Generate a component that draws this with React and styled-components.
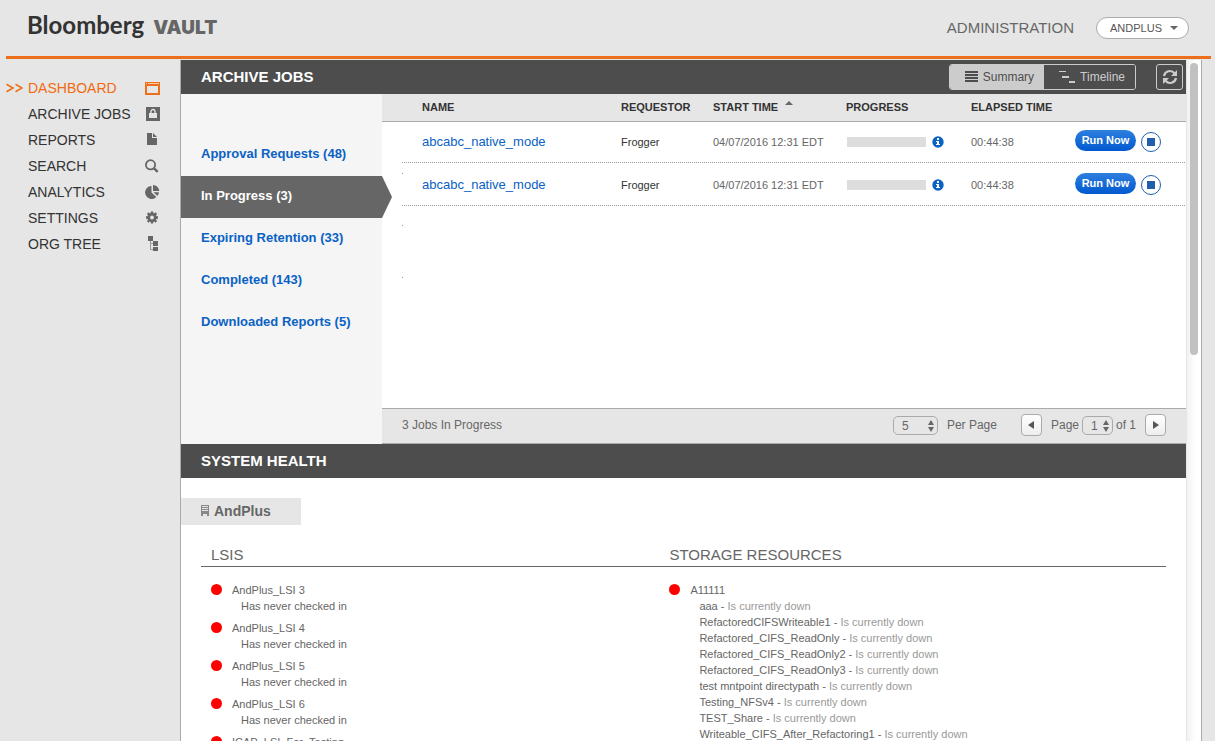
import React, { useState } from 'react';
import styled, { createGlobalStyle } from 'styled-components';

const GlobalStyle = createGlobalStyle`
  * { box-sizing: border-box; }
  body {
    margin: 0;
    background: #e6e6e6;
    color: #666;
    font-family: "Liberation Sans", Arial, Helvetica, sans-serif;
    font-size: 11px;
  }
  button, select { font-family: inherit; }
  a { text-decoration: none; }
  ul { list-style: none; margin: 0; padding: 0; }
  h1, h2, h3 { margin: 0; }
`;

const Page = styled.div`
  display: flex;
  flex-direction: column;
  height: 100vh;
  overflow: hidden;
`;

const Header = styled.header`
  display: flex;
  align-items: center;
  flex: none;
  height: 59px;
  margin: 0 4px 0 6px;
  padding: 0 22px 0 21px;
  border-bottom: 3px solid #ec6f1b;
`;

const Logo = styled.h1`
  display: flex;
  align-items: baseline;
  gap: 9px;
  flex: 1;
  padding-bottom: 4px;
  font-family: Lato, sans-serif;
  font-size: 24px;
  font-weight: 700;
  line-height: 32px;
  color: #333;
`;

const LogoSuffix = styled.span`
  font-family: Inter, sans-serif;
  font-size: 19px;
  font-weight: 900;
  color: #666;
`;

const AdminLink = styled.a`
  font-size: 15px;
  line-height: 16px;
  padding-bottom: 1px;
  color: #666;
`;

const AccountButton = styled.button`
  display: flex;
  align-items: center;
  gap: 8px;
  height: 22px;
  margin-left: 22px;
  padding: 0 10px 0 13px;
  border: 1px solid #aaa;
  border-radius: 11px;
  background: #fff;
  color: #555;
  font-size: 11px;
`;

const Body = styled.div`
  display: flex;
  flex: 1;
  min-height: 0;
  margin-top: 1px;
  padding-right: 13px;
`;

const Sidebar = styled.nav`
  flex: none;
  width: 180px;
  padding-top: 15px;
`;

const NavLink = styled.a`
  display: grid;
  grid-template-columns: 22px 1fr 16px;
  align-items: center;
  height: 26px;
  padding: 0 19px 0 6px;
  font-size: 14px;
  color: ${(p) => (p.$active ? '#f26a12' : '#333')};

  svg {
    color: ${(p) => (p.$active ? '#ec6f1b' : '#666')};
  }
`;

const Content = styled.main`
  flex: 1;
  min-width: 0;
  overflow: hidden;
  border-left: 1px solid #aaa;
  background: #fff;
`;

const ScrollTrack = styled.div`
  flex: none;
  width: 16px;
  padding: 3px 3px 0;
  border-left: 1px solid #e6e6e6;
  border-right: 1px solid #aaa;
  background: linear-gradient(to right, #f2f2f2, #fff 60%);
`;

const ScrollThumb = styled.div`
  width: 8px;
  height: 43%;
  border-radius: 4px;
  background: #c1c1c1;
`;

const SectionBar = styled.div`
  display: flex;
  align-items: center;
  height: 34px;
  padding: 0 3px 0 20px;
  background: #4d4d4d;
`;

const SectionTitle = styled.h2`
  flex: 1;
  padding-bottom: 2px;
  font-size: 15px;
  color: #fff;
`;

const ViewSwitch = styled.div`
  display: flex;
  height: 26px;
  margin-right: 20px;
  border: 1px solid #ccc;
  border-radius: 3px;
  overflow: hidden;
`;

const ViewButton = styled.button`
  display: flex;
  align-items: center;
  gap: 4px;
  padding: 0 10px 0 15px;
  border: 0;
  background: ${(p) => (p.$on ? '#ccc' : '#4d4d4d')};
  color: ${(p) => (p.$on ? '#4d4d4d' : '#ccc')};
  font-size: 12px;
`;

const RefreshButton = styled.button`
  display: flex;
  align-items: center;
  justify-content: center;
  width: 27px;
  height: 26px;
  padding: 0;
  border: 1px solid #ccc;
  border-radius: 3px;
  background: transparent;
  color: #ccc;
`;

const Jobs = styled.section`
  display: flex;
  min-height: 350px;
`;

const JobTabs = styled.nav`
  flex: none;
  width: 201px;
  padding-top: 40px;
  background: #f5f5f5;
`;

const JobTab = styled.a`
  position: relative;
  display: block;
  height: 42px;
  padding-left: 20px;
  font-size: 13px;
  font-weight: bold;
  line-height: 40px;
  color: ${(p) => (p.$active ? '#fff' : '#0a62c4')};
  background: ${(p) => (p.$active ? '#666' : 'transparent')};

  &::after {
    content: '';
    display: ${(p) => (p.$active ? 'block' : 'none')};
    position: absolute;
    top: 0;
    left: 100%;
    border: solid transparent;
    border-width: 21px 0 21px 10px;
    border-left-color: #666;
  }
`;

const JobPanel = styled.div`
  display: flex;
  flex-direction: column;
  flex: 1;
  min-width: 0;
`;

const dot = 'linear-gradient(#999, #999)';

const TableArea = styled.div`
  flex: 1;
  background: ${dot} 20px 79px / 1px 1px no-repeat,
    ${dot} 20px 131px / 1px 1px no-repeat,
    ${dot} 20px 183px / 1px 1px no-repeat;
`;

const JobTable = styled.table`
  width: 100%;
  table-layout: fixed;
  border-collapse: separate;
  border-spacing: 0;
  text-align: left;

  th {
    height: 28px;
    padding: 0 0 2px;
    border-bottom: 1px solid #aaa;
    background: #e6e6e6;
    color: #333;
    font-size: 11px;
  }
  td {
    height: 43px;
    padding: 0;
  }
  tbody tr {
    background: repeating-linear-gradient(to right, #999 0 1px, transparent 1px 2px) 20px 100% / 100% 1px no-repeat;
  }
  tbody tr:first-child td {
    height: 41px;
    padding-bottom: 2px;
  }
  th:nth-child(2), td:nth-child(2) {
    padding-left: 20px;
  }
`;

const SortArrow = styled.svg`
  margin-left: 7px;
  vertical-align: 6px;
`;

const JobLink = styled.a`
  font-size: 13px;
  color: #0a62c4;
`;

const Requestor = styled.span`
  color: #333;
`;

const Progress = styled.div`
  display: flex;
  align-items: center;
  gap: 6px;
  padding-left: 1px;
  color: #0a62c4;
`;

const ProgressBar = styled.div`
  width: 79px;
  height: 10px;
  background: #ddd;
`;

const Actions = styled.div`
  display: flex;
  align-items: center;
  gap: 5px;
`;

const RunButton = styled.button`
  width: 61px;
  height: 21px;
  margin-bottom: 3px;
  padding: 0 0 1px;
  border: 0;
  border-radius: 11px;
  background: linear-gradient(#2f7fdf, #0059cf);
  color: #fff;
  font-size: 11px;
  font-weight: bold;
`;

const StopButton = styled.button`
  display: flex;
  align-items: center;
  justify-content: center;
  width: 20px;
  height: 20px;
  padding: 0;
  border: 1px solid #1f5fae;
  border-radius: 50%;
  background: #fff;

  &::before {
    content: '';
    width: 8px;
    height: 8px;
    background: #1f5fae;
  }
`;

const Footer = styled.div`
  display: flex;
  align-items: center;
  height: 36px;
  padding: 0 20px 2px;
  border-top: 1px solid #aaa;
  border-bottom: 1px solid #aaa;
  background: #e6e6e6;
  font-size: 12px;
`;

const FooterCount = styled.span`
  flex: 1;
`;

const SelectBox = styled.span`
  display: flex;
  align-items: center;
  position: relative;
  padding-top: 1px;

  svg {
    position: absolute;
    right: 4px;
    pointer-events: none;
  }
`;

const Select = styled.select`
  appearance: none;
  width: ${(p) => (p.$small ? '31px' : '45px')};
  height: 19px;
  padding: 0 8px;
  border: 1px solid #aaa;
  border-radius: 5px;
  background: transparent;
  color: #666;
  font-size: 12px;
`;

const PerPage = styled.label`
  display: flex;
  align-items: center;
  gap: 9px;
  margin-right: 24px;
`;

const PageLabel = styled.label`
  display: flex;
  align-items: center;
  gap: 3px;
  margin: 0 9px;
`;

const PagerButton = styled.button`
  display: flex;
  align-items: center;
  justify-content: center;
  width: 21px;
  height: 22px;
  padding: 0;
  border: 1px solid #aaa;
  border-radius: 4px;
  background: linear-gradient(#fff, #eee);
  color: #555;
`;

const Health = styled.section`
  padding-top: 20px;
`;

const OrgTab = styled.h3`
  display: flex;
  align-items: center;
  gap: 5px;
  width: 120px;
  height: 27px;
  padding: 0 0 2px 20px;
  background: #e6e6e6;
  font-size: 14px;
`;

const HealthGrid = styled.div`
  display: grid;
  grid-template-columns: 19fr 21fr;
  margin: 20px 20px 0;
`;

const HealthTitle = styled.h3`
  padding: 0 10px 2px;
  border-bottom: 1px solid #666;
  font-size: 15px;
  font-weight: normal;
  line-height: 19px;
`;

const StatusList = styled.ul`
  padding: 15px 10px 0;
  line-height: 16px;
`;

const StatusItem = styled.li`
  display: grid;
  grid-template-columns: 11px 1fr;
  column-gap: 10px;
  margin-bottom: 6px;

  &::before {
    content: '';
    height: 11px;
    margin-top: 2px;
    border-radius: 50%;
    background: #f00;
  }
`;

const Detail = styled.div`
  padding-left: 9px;
`;

const Muted = styled.span`
  color: #999;
`;

const ChevronsIcon = () => (
  <svg width="17" height="10" viewBox="0 0 17 10" fill="none" stroke="currentColor" strokeWidth="1.600">
    <path d="M.5 1.300L7 5 .5 8.700M9.500 1.300L16 5l-6.500 3.700" />
  </svg>
);

const DashboardIcon = () => (
  <svg width="16" height="14" viewBox="0 0 16 14">
    <path fill="currentColor" fillRule="evenodd" d="M0 1h15v13H0zM2 5v7h11V5z" />
    <path fill="#f8c9a5" d="M1 2h1v1H1zM3 2h11v1H3z" />
  </svg>
);

const LockIcon = () => (
  <svg width="16" height="14" viewBox="0 0 16 14">
    <path fill="currentColor" d="M1 0h14v14H1z" />
    <path fill="#e6e6e6" d="M4 6h8v5H4z" />
    <path fill="none" stroke="#e6e6e6" strokeWidth="1.300" d="M6 6V4.500a2 2 0 0 1 4 0V6" />
  </svg>
);

const FileIcon = () => (
  <svg width="16" height="14" viewBox="0 0 16 14">
    <path fill="currentColor" d="M2 0h5v5h5v7H2zM8 0l4 4H8z" />
  </svg>
);

const SearchIcon = () => (
  <svg width="16" height="14" viewBox="0 0 16 14" fill="none" stroke="currentColor">
    <circle cx="5.500" cy="5.800" r="4.600" strokeWidth="1.800" />
    <path strokeWidth="2.400" d="M9 9.300l3.700 3.600" />
  </svg>
);

const PieIcon = () => (
  <svg width="16" height="14" viewBox="0 0 16 14" fill="currentColor">
    <path d="M6.500 1v6.500l4.800 4.500A6.500 6.500 0 1 1 6.500 1z" />
    <path d="M8 0a6.300 6.300 0 0 1 6.300 6H8z" />
    <path d="M8.500 7.200h5.500a6 6 0 0 1-1.700 3.800z" />
  </svg>
);

const GearIcon = () => (
  <svg width="16" height="14" viewBox="0 0 16 14">
    <circle cx="7" cy="6.500" r="3.300" fill="none" stroke="currentColor" strokeWidth="2.800" />
    <path
      stroke="currentColor"
      strokeWidth="2.400"
      d="M7 .5v2M7 10.500v2M1 6.500h2M11 6.500h2M2.700 2.200l1.500 1.500M9.800 9.300l1.500 1.500M2.700 10.800l1.500-1.500M9.800 3.700l1.500-1.500"
    />
  </svg>
);

const TreeIcon = () => (
  <svg width="16" height="16" viewBox="0 0 16 16">
    <path fill="none" stroke="#999" d="M5.500 5v8.500H9M5.500 7.500H9" />
    <path fill="currentColor" d="M3 0h5v5H3zM8 5h5v5H8zM8 11h5v4H8z" />
  </svg>
);

const SummaryIcon = () => (
  <svg width="14" height="12" viewBox="0 0 14 12" fill="currentColor">
    <path d="M0 0h13v2H0zM0 3h13v2H0zM0 6h13v2H0zM0 9h13v2H0z" />
  </svg>
);

const TimelineIcon = () => (
  <svg width="17" height="12" viewBox="0 0 17 12" fill="currentColor">
    <path d="M0 0h7v1H0zM3 5h7v2H3zM10 10h6v2h-6z" />
  </svg>
);

const RefreshIcon = () => (
  <svg width="16" height="16" viewBox="0 0 16 16">
    <path fill="none" stroke="currentColor" strokeWidth="2.200" d="M2 7A6 6 0 0 1 12.500 4.200M14 9A6 6 0 0 1 3.500 11.800" />
    <path fill="currentColor" d="M15 1v6H9zM1 15V9h6z" />
  </svg>
);

const InfoIcon = () => (
  <svg width="12" height="12" viewBox="0 0 12 12">
    <circle cx="6" cy="6" r="5.700" fill="currentColor" />
    <path fill="#fff" d="M5 2h2v2H5zM4 5h3v3h1v1H4V8h1V6H4z" />
  </svg>
);

const BuildingIcon = () => (
  <svg width="8" height="11" viewBox="0 0 8 11">
    <path fill="#888" fillRule="evenodd" d="M0 0h8v11H6V9H2v2H0zM1 1v1h6V1zM1 3v1h6V3zM1 5v1h6V5z" />
  </svg>
);

const UpDownIcon = () => (
  <svg width="6" height="12" viewBox="0 0 6 12" fill="#666">
    <path d="M3 0l3 5H0zM3 12l3-5H0z" />
  </svg>
);

const navItems = [
  { name: 'DASHBOARD', icon: <DashboardIcon />, active: true },
  { name: 'ARCHIVE JOBS', icon: <LockIcon /> },
  { name: 'REPORTS', icon: <FileIcon /> },
  { name: 'SEARCH', icon: <SearchIcon /> },
  { name: 'ANALYTICS', icon: <PieIcon /> },
  { name: 'SETTINGS', icon: <GearIcon /> },
  { name: 'ORG TREE', icon: <TreeIcon /> },
];

const jobTabs = [
  'Approval Requests (48)',
  'In Progress (3)',
  'Expiring Retention (33)',
  'Completed (143)',
  'Downloaded Reports (5)',
];

const jobs = [
  { id: 1, name: 'abcabc_native_mode', requestor: 'Frogger', start: '04/07/2016 12:31 EDT', elapsed: '00:44:38' },
  { id: 2, name: 'abcabc_native_mode', requestor: 'Frogger', start: '04/07/2016 12:31 EDT', elapsed: '00:44:38' },
];

const lsis = ['AndPlus_LSI 3', 'AndPlus_LSI 4', 'AndPlus_LSI 5', 'AndPlus_LSI 6', 'ICAP_LSI_For_Testing'];

const storage = [
  'aaa',
  'RefactoredCIFSWriteable1',
  'Refactored_CIFS_ReadOnly',
  'Refactored_CIFS_ReadOnly2',
  'Refactored_CIFS_ReadOnly3',
  'test mntpoint directypath',
  'Testing_NFSv4',
  'TEST_Share',
  'Writeable_CIFS_After_Refactoring1',
];

const App = () => {
  const [tab, setTab] = useState('In Progress (3)');
  const [view, setView] = useState('summary');

  return (
    <Page>
      <GlobalStyle />
      <Header>
        <Logo>
          Bloomberg <LogoSuffix>VAULT</LogoSuffix>
        </Logo>
        <AdminLink href="#admin">ADMINISTRATION</AdminLink>
        <AccountButton>
          ANDPLUS
          <svg width="8" height="4" viewBox="0 0 8 4" fill="#666"><path d="M0 0h8L4 4z" /></svg>
        </AccountButton>
      </Header>

      <Body>
        <Sidebar>
          {navItems.map((item) => (
            <NavLink href="#" key={item.name} $active={item.active}>
              <span>{item.active && <ChevronsIcon />}</span>
              <span>{item.name}</span>
              {item.icon}
            </NavLink>
          ))}
        </Sidebar>

        <Content>
          <SectionBar>
            <SectionTitle>ARCHIVE JOBS</SectionTitle>
            <ViewSwitch>
              <ViewButton $on={view === 'summary'} onClick={() => setView('summary')}>
                <SummaryIcon /> Summary
              </ViewButton>
              <ViewButton $on={view === 'timeline'} onClick={() => setView('timeline')}>
                <TimelineIcon /> Timeline
              </ViewButton>
            </ViewSwitch>
            <RefreshButton aria-label="Refresh">
              <RefreshIcon />
            </RefreshButton>
          </SectionBar>

          <Jobs>
            <JobTabs>
              {jobTabs.map((name) => (
                <JobTab href="#" key={name} $active={name === tab} onClick={() => setTab(name)}>
                  {name}
                </JobTab>
              ))}
            </JobTabs>

            <JobPanel>
              <TableArea>
                <JobTable>
                  <colgroup>
                    <col width="20" />
                    <col />
                    <col width="92" />
                    <col width="133" />
                    <col width="125" />
                    <col width="104" />
                    <col width="111" />
                  </colgroup>
                  <thead>
                    <tr>
                      <th />
                      <th>NAME</th>
                      <th>REQUESTOR</th>
                      <th>
                        START TIME
                        <SortArrow width="8" height="4" viewBox="0 0 8 4" fill="#666"><path d="M4 0l4 4H0z" /></SortArrow>
                      </th>
                      <th>PROGRESS</th>
                      <th>ELAPSED TIME</th>
                      <th />
                    </tr>
                  </thead>
                  <tbody>
                    {jobs.map((job) => (
                      <tr key={job.id}>
                        <td />
                        <td><JobLink href="#">{job.name}</JobLink></td>
                        <td><Requestor>{job.requestor}</Requestor></td>
                        <td>{job.start}</td>
                        <td>
                          <Progress>
                            <ProgressBar />
                            <InfoIcon />
                          </Progress>
                        </td>
                        <td>{job.elapsed}</td>
                        <td>
                          <Actions>
                            <RunButton>Run Now</RunButton>
                            <StopButton aria-label="Stop" />
                          </Actions>
                        </td>
                      </tr>
                    ))}
                  </tbody>
                </JobTable>
              </TableArea>

              <Footer>
                <FooterCount>3 Jobs In Progress</FooterCount>
                <PerPage>
                  <SelectBox>
                    <Select><option>5</option></Select>
                    <UpDownIcon />
                  </SelectBox>
                  Per Page
                </PerPage>
                <PagerButton aria-label="Previous page">
                  <svg width="6" height="8" viewBox="0 0 6 8" fill="currentColor"><path d="M6 0v8L0 4z" /></svg>
                </PagerButton>
                <PageLabel>
                  Page
                  <SelectBox>
                    <Select $small><option>1</option></Select>
                    <UpDownIcon />
                  </SelectBox>
                  of 1
                </PageLabel>
                <PagerButton aria-label="Next page">
                  <svg width="6" height="8" viewBox="0 0 6 8" fill="currentColor"><path d="M0 0v8l6-4z" /></svg>
                </PagerButton>
              </Footer>
            </JobPanel>
          </Jobs>

          <SectionBar>
            <SectionTitle>SYSTEM HEALTH</SectionTitle>
          </SectionBar>
          <Health>
            <OrgTab><BuildingIcon /> AndPlus</OrgTab>
            <HealthGrid>
              <HealthTitle>LSIS</HealthTitle>
              <HealthTitle>STORAGE RESOURCES</HealthTitle>
              <StatusList>
                {lsis.map((name) => (
                  <StatusItem key={name}>
                    <div>
                      {name}
                      <Detail>Has never checked in</Detail>
                    </div>
                  </StatusItem>
                ))}
              </StatusList>
              <StatusList>
                <StatusItem>
                  <div>
                    A11111
                    {storage.map((name) => (
                      <Detail key={name}>
                        {name} - <Muted>Is currently down</Muted>
                      </Detail>
                    ))}
                  </div>
                </StatusItem>
              </StatusList>
            </HealthGrid>
          </Health>
        </Content>
        <ScrollTrack>
          <ScrollThumb />
        </ScrollTrack>
      </Body>
    </Page>
  );
};

export default App;
